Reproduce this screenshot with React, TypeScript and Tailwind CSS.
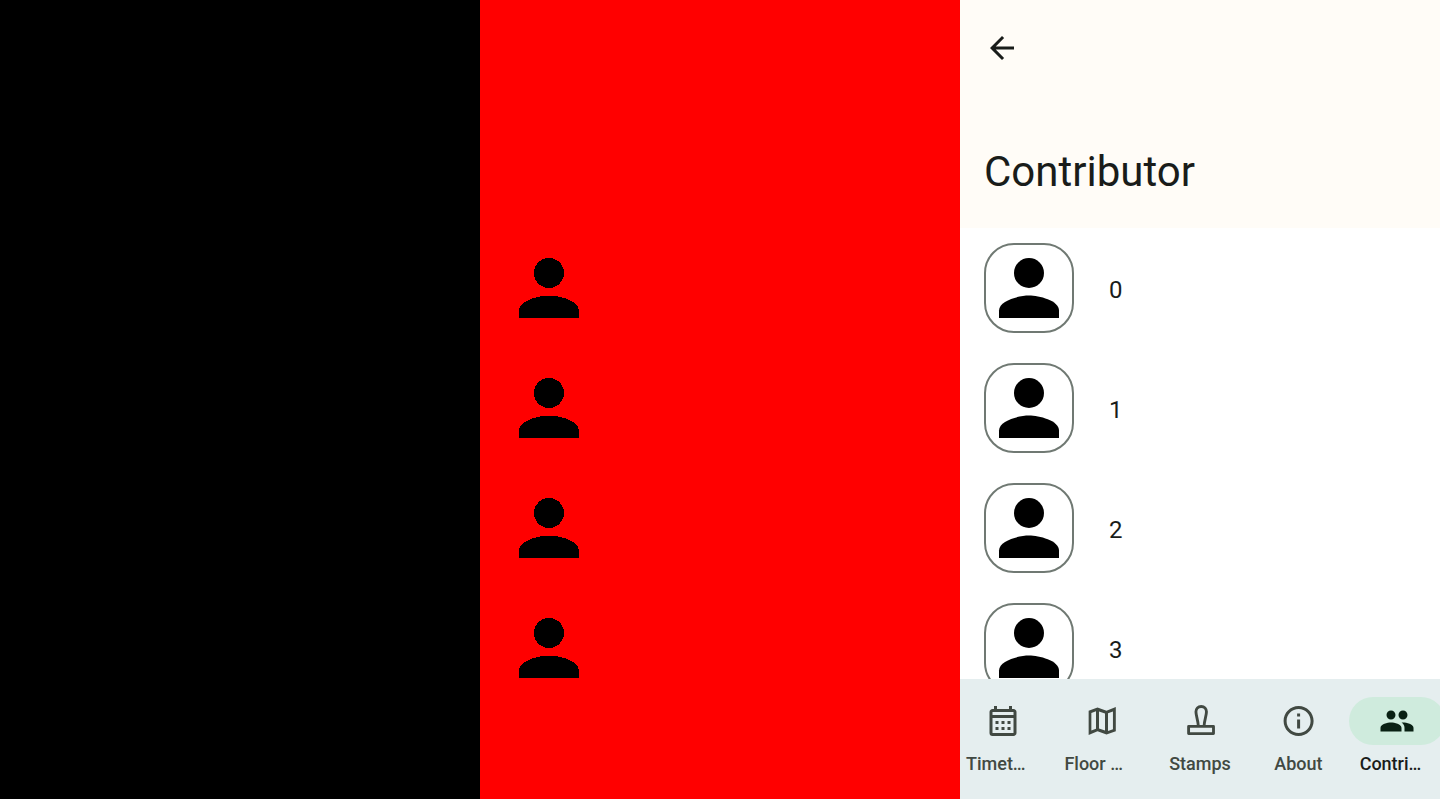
import type { ReactNode } from 'react'

const contributors = [0, 1, 2, 3]

function PersonIcon({ crisp = false }: { crisp?: boolean }) {
  return (
    <svg
      viewBox="0 0 24 24"
      className="size-full"
      fill="#000"
      shapeRendering={crisp ? 'crispEdges' : 'auto'}
      aria-hidden="true"
    >
      <circle cx="12" cy="8" r="4" />
      <path d="M12 14c-2.67 0-8 1.34-8 4v2h16v-2c0-2.66-5.33-4-8-4z" />
    </svg>
  )
}

function Icon({ children }: { children: ReactNode }) {
  return (
    <svg viewBox="0 0 24 24" className="size-9 shrink-0" fill="currentColor" aria-hidden="true">
      {children}
    </svg>
  )
}

const tabs = [
  {
    label: 'Timet…',
    clipped: true,
    icon: (
      <path d="M19 4h-1V2h-2v2H8V2H6v2H5c-1.11 0-1.99.9-1.99 2L3 20a2 2 0 0 0 2 2h14c1.1 0 2-.9 2-2V6c0-1.1-.9-2-2-2zm0 16H5V10h14v10zm0-12H5V6h14v2zM9 14H7v-2h2v2zm4 0h-2v-2h2v2zm4 0h-2v-2h2v2zm-8 4H7v-2h2v2zm4 0h-2v-2h2v2zm4 0h-2v-2h2v2z" />
    ),
  },
  {
    label: 'Floor …',
    clipped: true,
    icon: (
      <path d="M21.2 2.6L15 5.1 9 3 3.1 5.2V21.4L9 18.9l6 2.1 6.2-2.2zM10 5.6l4 1.4v11.4l-4-1.4zM4.9 6.6l3.1-1.1v11.6l-3.1 1.2zM19.3 17.5L16 18.6V6.9l3.3-1.2z" />
    ),
  },
  {
    label: 'Stamps',
    icon: (
      <g fill="none" stroke="currentColor" strokeWidth="1.9" strokeLinejoin="round">
        <rect x="4.4" y="15.6" width="16.6" height="4.8" />
        <path d="M10.9 15.5C10.7 11.5 9.3 8.5 9.3 5.9C9.3 3.7 10.7 2.3 12.8 2.3S16.3 3.7 16.3 5.9C16.3 8.5 14.9 11.5 14.7 15.5" />
      </g>
    ),
  },
  {
    label: 'About',
    icon: (
      <path
        d="M11 7h2v2h-2zm0 4h2v6h-2zm1-9C6.48 2 2 6.48 2 12s4.48 10 10 10 10-4.48 10-10S17.52 2 12 2zm0 18c-4.41 0-8-3.59-8-8s3.59-8 8-8 8 3.59 8 8-3.59 8-8 8z"
        transform="translate(.4 0)"
      />
    ),
  },
  {
    label: 'Contri…',
    clipped: true,
    active: true,
    icon: (
      <path d="M16 11c1.66 0 2.99-1.34 2.99-3S17.66 5 16 5c-1.66 0-3 1.34-3 3s1.34 3 3 3zm-8 0c1.66 0 2.99-1.34 2.99-3S9.66 5 8 5C6.34 5 5 6.34 5 8s1.34 3 3 3zm0 2c-2.33 0-7 1.17-7 3.5V19h14v-2.5c0-2.33-4.67-3.5-7-3.5zm8 0c-.29 0-.62.02-.97.05 1.16.84 1.97 1.97 1.97 3.45V19h6v-2.5c0-2.33-4.67-3.5-7-3.5z" />
    ),
  },
]

function ContributorScreen() {
  return (
    <main className="flex min-h-0 min-w-0 flex-col overflow-hidden bg-white">
      <header className="flex h-57 shrink-0 flex-col justify-between bg-[#fffcf7] px-6 pt-6 pb-8">
        <button type="button" aria-label="Back" className="flex size-12 items-center">
          <svg viewBox="0 0 24 24" className="size-9 shrink-0" fill="currentColor" aria-hidden="true">
            <path d="M20 11H7.83l5.59-5.59L12 4l-8 8 8 8 1.41-1.41L7.83 13H20v-2z" />
          </svg>
        </button>
        <h1 className="text-[42px] leading-12">Contributor</h1>
      </header>
      <ul className="min-h-0 flex-1 overflow-hidden">
        {contributors.map((id) => (
          <li key={id} className="flex h-30 items-center gap-[35px] px-6">
            <span className="relative size-[90px] shrink-0">
              <PersonIcon />
              <span className="absolute inset-0 rounded-[30px] border-2 border-[#707973]" />
            </span>
            <span className="pt-1 text-2xl">{id}</span>
          </li>
        ))}
      </ul>
      <nav className="flex h-30 shrink-0 gap-3 overflow-hidden bg-[#e5eeef]">
        {tabs.map((tab) => (
          <a
            key={tab.label}
            href="#"
            aria-current={tab.active ? 'page' : undefined}
            className="flex min-w-0 flex-1 flex-col items-center pt-[18px]"
          >
            <span
              className={
                tab.active
                  ? 'flex h-12 w-24 shrink-0 items-center justify-center rounded-full bg-[#cfebdd] text-[#092013]'
                  : 'flex h-12 w-24 shrink-0 items-center justify-center text-[#414942]'
              }
            >
              <Icon>{tab.icon}</Icon>
            </span>
            <span
              className={`mt-[7px] w-full px-1.5 text-lg leading-6 font-medium whitespace-nowrap ${
                tab.clipped ? 'text-left' : 'text-center'
              } ${tab.active ? 'text-[#191c1a]' : 'text-[#414942]'}`}
            >
              {tab.label}
            </span>
          </a>
        ))}
      </nav>
    </main>
  )
}

export default function App() {
  return (
    <div className="grid h-screen grid-cols-3 overflow-hidden font-['Roboto',sans-serif] text-[#191c1a]">
      <div className="bg-black" />
      <div className="overflow-hidden bg-[#ff0000] pt-57">
        {contributors.map((id) => (
          <div key={id} className="flex h-30 items-center px-6">
            <span className="size-[90px]">
              <PersonIcon crisp />
            </span>
          </div>
        ))}
      </div>
      <ContributorScreen />
    </div>
  )
}
